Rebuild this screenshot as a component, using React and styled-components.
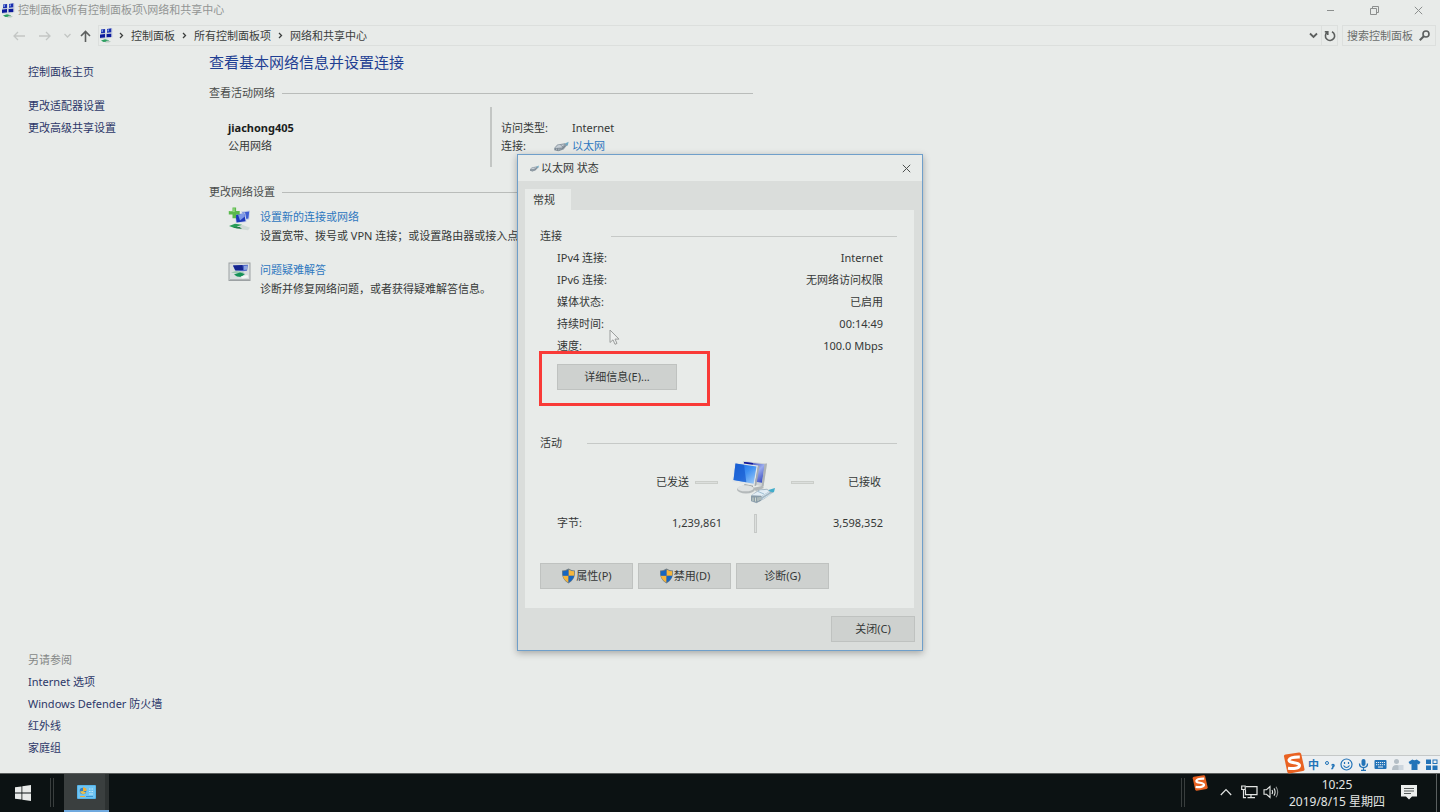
import React from "react";
import styled, { createGlobalStyle } from "styled-components";

const GlobalStyle = createGlobalStyle`
  *, *::before, *::after { box-sizing: border-box; }
  body {
    margin: 0;
    background: #e8ebe9;
    color: #353837;
    font-family: "Noto Sans", "Noto Sans CJK SC", sans-serif;
    font-size: 11px;
    line-height: 18px;
  }
  button, input { font: inherit; color: inherit; }
  a { text-decoration: none; color: inherit; }
  h1, h2, p, dl, dd, ul { margin: 0; padding: 0; font-weight: 400; }
  svg { display: block; flex: none; }
`;

const Desktop = styled.div`
  position: relative;
  display: flex;
  flex-direction: column;
  min-height: 100vh;
`;

/* ---------- window chrome ---------- */

const TitleBar = styled.header`
  display: flex;
  align-items: center;
  height: 20px;
  padding-left: 2px;
  color: #929594;
`;

const WindowTitle = styled.h1`
  flex: 1;
  margin-left: 3px;
  font-size: 11px;
  line-height: 18px;
`;

const CaptionButton = styled.button`
  display: grid;
  place-items: center;
  width: ${(p) => p.$width || 44}px;
  height: 20px;
  padding: 0;
  border: 0;
  background: none;
  color: ${(p) => p.$color || "#8c8f8e"};
`;

const AddressRow = styled.nav`
  display: flex;
  align-items: center;
  height: 26px;
  padding: 5px 4px 0 10px;
`;

const NavButton = styled.button`
  display: grid;
  place-items: center;
  width: ${(p) => p.$width}px;
  height: 20px;
  padding: 0;
  border: 0;
  background: none;
  color: ${(p) => (p.$active ? "#5c5f5e" : "#c3c6c4")};
`;

const AddressBox = styled.div`
  display: flex;
  align-items: center;
  flex: 1;
  height: 21px;
  padding-left: 1px;
  border: 1px solid #dcdfdd;
`;

const Crumbs = styled.div`
  display: flex;
  align-items: center;
  flex: 1;
  gap: 7px;
  margin-left: 6px;
  color: #3b3e3d;
`;

const Refresh = styled(NavButton)`
  border-left: 1px solid #dcdfdd;
  height: 19px;
`;

const SearchBox = styled.label`
  display: flex;
  align-items: center;
  width: 94px;
  height: 21px;
  margin-left: 4px;
  padding: 0 5px 0 4px;
  border: 1px solid #dcdfdd;
  color: #5c5f5e;
`;

const SearchInput = styled.input`
  flex: 1;
  min-width: 0;
  height: 18px;
  padding: 0;
  border: 0;
  outline: 0;
  background: none;
  &::placeholder { color: #6b6e6d; opacity: 1; }
`;

/* ---------- page ---------- */

const Body = styled.div`
  display: flex;
  flex: 1;
`;

const Sidebar = styled.aside`
  display: flex;
  flex-direction: column;
  justify-content: space-between;
  width: 209px;
  flex: none;
  padding: 15px 0 14px 28px;
`;

const SideGroup = styled.div`
  display: flex;
  flex-direction: column;
  align-items: flex-start;
  margin-bottom: 12px;
  &:last-child { margin-bottom: 0; }
`;

const SideLink = styled.a`
  line-height: 22px;
  color: #2c3768;
`;

const SideCaption = styled.span`
  line-height: 22px;
  color: #858887;
`;

const Main = styled.main`
  flex: 1;
  max-width: 544px;
  padding-top: 4px;
`;

const PageHeading = styled.h2`
  font-size: 15px;
  line-height: 24px;
  color: #1f3f93;
  margin-bottom: 10px;
`;

const SectionHead = styled.h2`
  display: flex;
  align-items: center;
  font-size: 11px;
  line-height: 18px;
  color: #484b4a;
  &::after {
    content: "";
    flex: 1;
    height: 1px;
    margin-left: 7px;
    background: #b9bcba;
  }
`;

const NetworkBlock = styled.div`
  display: flex;
  height: 60px;
  margin: 5px 0 16px;
  padding-left: 19px;
`;

const NetworkName = styled.div`
  width: 264px;
  padding-top: 12px;
  border-right: 2px solid #c3c6c4;
`;

const StrongName = styled.strong`
  display: block;
  color: #1b1d1c;
  font-weight: 700;
`;

const NetworkFacts = styled.dl`
  display: grid;
  grid-template-columns: 52px auto;
  grid-auto-rows: 18px;
  padding: 12px 0 0 9px;
`;

const FactValue = styled.dd`
  display: flex;
  align-items: center;
  gap: 3px;
  padding-left: ${(p) => (p.$icon ? 1 : 19)}px;
`;

const Link = styled.a`
  color: #2d77bf;
`;

const TaskList = styled.ul`
  display: flex;
  flex-direction: column;
  gap: 15px;
  list-style: none;
  padding: 6px 0 0 19px;
`;

const Task = styled.li`
  display: flex;
  gap: 9px;
  line-height: 19px;
  white-space: nowrap;
`;

const TaskText = styled.div`
  display: flex;
  flex-direction: column;
`;

/* ---------- status dialog ---------- */

const Dialog = styled.section`
  position: absolute;
  left: 517px;
  top: 154px;
  width: 406px;
  border: 1px solid #6f9fca;
  background: #dadddb;
  box-shadow: 0 2px 7px rgba(0, 0, 0, 0.3);
`;

const DialogBar = styled.header`
  display: flex;
  align-items: center;
  height: 26px;
  padding-left: 12px;
  gap: 2px;
  background: #e8ebe9;
`;

const DialogTitle = styled.h2`
  flex: 1;
  font-size: 11px;
  line-height: 18px;
`;

const DialogBody = styled.div`
  padding: 8px 7px;
`;

const Tab = styled.button`
  display: block;
  width: 46px;
  height: 21px;
  padding: 0 8px;
  border: 0;
  text-align: left;
  background: #e8ebe9;
`;

const Panel = styled.div`
  margin-right: 1px;
  padding: 16px 17px 19px 15px;
  background: #e8ebe9;
`;

const GroupHead = styled.div`
  display: flex;
  align-items: center;
  height: 20px;
  &::after {
    content: "";
    flex: 1;
    height: 1px;
    margin-left: ${(p) => p.$gap}px;
    background: #c6c9c7;
  }
`;

const StatusList = styled.dl`
  padding: 1px 14px 0 17px;
`;

const StatusRow = styled.div`
  display: flex;
  justify-content: space-between;
  line-height: 22px;
`;

const PushButton = styled.button`
  display: flex;
  align-items: center;
  justify-content: center;
  width: ${(p) => p.$width}px;
  height: 26px;
  padding: 0;
  border: 1px solid #bfc2c0;
  background: #ced1cf;
`;

const DetailsArea = styled.div`
  position: relative;
  padding: 7px 0 43px 17px;
`;

const Highlight = styled.div`
  position: absolute;
  left: -1px;
  top: -6px;
  width: 171px;
  height: 55px;
  border: 3px solid #f93a37;
  pointer-events: none;
`;

const Pointer = styled.svg`
  position: absolute;
  left: 91px;
  top: 174px;
`;

const Activity = styled.div`
  display: grid;
  grid-template-columns: 149px 42px 52px 34px 1fr;
  align-items: center;
  height: 58px;
  padding-right: 16px;
  text-align: right;
`;

const Dash = styled.span`
  width: 23px;
  height: 3px;
  margin-left: ${(p) => p.$inset}px;
  border: 1px solid #cbceca;
  background: #dcdfdd;
`;

const Bytes = styled.div`
  display: grid;
  grid-template-columns: 65px 100px 1fr 1fr;
  align-items: center;
  height: 24px;
  margin-bottom: 28px;
  padding: 0 14px 0 17px;
  text-align: right;
`;

const BytesLabel = styled.span`
  text-align: left;
`;

const ByteBar = styled.span`
  width: 3px;
  height: 19px;
  margin-left: 32px;
  border: 1px solid #c6c9c7;
  background: #dcdfdd;
`;

const ButtonRow = styled.div`
  display: flex;
  gap: 5px;
`;

const DialogFooter = styled.footer`
  display: flex;
  justify-content: flex-end;
  padding-top: 8px;
`;

/* ---------- input method bar and taskbar ---------- */

const ImeBar = styled.div`
  position: absolute;
  right: 0;
  bottom: 39px;
  display: flex;
  align-items: center;
  gap: 4px;
  height: 18px;
  padding: 0 2px 0 13px;
  border-top: 1px solid #c5c8c8;
  background: #eceff1;
  color: #2273b8;
`;

const ImeLogo = styled.div`
  position: absolute;
  left: -12px;
  top: -4px;
`;

const ImeMode = styled.span`
  width: 11px;
  font-weight: 700;
  line-height: 16px;
`;

const Taskbar = styled.footer`
  display: flex;
  height: 39px;
  border-top: 1px solid #5b5e5d;
  background: #0c1213;
  color: #e3e5e4;
`;

const StartButton = styled.button`
  display: grid;
  place-items: center;
  width: 45px;
  padding: 0 0 1px;
  border: 0;
  background: none;
`;

const Grip = styled.span`
  width: 4px;
  height: 29px;
  margin: 4px ${(p) => p.$after}px 0 ${(p) => p.$before}px;
  border: solid #393e3e;
  border-width: 0 1px;
`;

const TaskButton = styled.button`
  display: grid;
  place-items: center;
  width: 45px;
  padding: 0;
  border: 0;
  border-bottom: 2px solid #6fa9de;
  background: linear-gradient(to right, #3a3f3f 41px, #2d3232 41px);
`;

const Spacer = styled.div`
  flex: 1;
`;

const TrayButton = styled.button`
  display: grid;
  align-content: ${(p) => (p.$top ? "start" : "center")};
  justify-content: center;
  width: ${(p) => p.$width}px;
  padding: 1px 0 ${(p) => (p.$top ? 0 : 3)}px;
  border: 0;
  background: none;
`;

const Clock = styled.button`
  width: 104px;
  padding: 0 0 1px;
  border: 0;
  background: none;
  font-size: 12px;
  line-height: 17px;
  text-align: center;
  white-space: nowrap;
`;

const ShowDesktop = styled.span`
  width: 4px;
  margin-left: 8px;
  border-left: 1px solid #5a5f5f;
`;

/* ---------- drawings ---------- */

const NetGlyph = () => (
  <svg width="13" height="15" viewBox="0 0 13 15" aria-hidden="true">
    <path d="M1 1.500l4-.6v4.400l-4 .3zM7 1l4.500-.8v4.300l-4.500.5z" fill="#1a2fae" />
    <path d="M0 6.500l5-.4v3.600l-5 .4zM6.500 6l5-.6v3.700l-5 .5z" fill="#0b1a9b" />
    <path d="M1.500 2l1.500-.3v2l-1.500.3zM7.500 1.600l1.500-.3v2l-1.500.3z" fill="#7f9ae4" />
    <path d="M0 5.700l5-.3M6 5.300l6-.5M0 10.400l11-.9" stroke="#bcc6d2" strokeWidth=".8" />
    <path d="M12 .5v9M5.600 1v9" stroke="#c4cde0" strokeWidth=".8" />
    <path d="M1 12.400l4-1.200 4 1-1.500 1.600-4 .2z" fill="#2d9f61" />
    <path d="M7 12.600l4 .7-2 1.200H5z" fill="#b7c9c0" />
  </svg>
);

const Plug = ({ width, height }) => (
  <svg width={width} height={height} viewBox="0 0 16 12" aria-hidden="true">
    <path d="M10 3.500L15.800.8 14.800 5l-3.300 1z" fill="#6fa9c4" />
    <path d="M0 7.500l3.500-3.700 8-1.300 2.300 2.300-3.500 4.500-5.800 2L0 10z" fill="#8f9ba5" />
    <path d="M1 7.500l3-2.800 7-1L8.300 7z" fill="#c6ced5" />
    <path d="M1 8.200l6.300-.5v2L4 10.700 1 9.500z" fill="#76838e" />
    <path d="M2.500 10V8.300M4.500 10.300V8.200M6.300 9.800V8" stroke="#dbe1e5" strokeWidth=".6" />
    <path d="M8 9l4-3.500M7 4.500l2.500 1.800" stroke="#6d7a85" strokeWidth=".7" />
  </svg>
);

const AddNetworkIcon = () => (
  <svg width="23" height="24" viewBox="0 0 23 24" aria-hidden="true">
    <path d="M13 4.600l9-1.200-.8 9-3 .6z" fill="#c2cde6" />
    <path d="M14 5.400l7.200-1-.8 7-2.500.5z" fill="#3f5fd2" />
    <path d="M6 7l11-1.500 1.800 9.500-10.800 1.300z" fill="#cfd8ea" />
    <path d="M7.500 7.800l8.800-1.200 1.300 7.600-9 1.200z" fill="#1d39bb" />
    <path d="M10 7.500l6.300-.9.500 3-4.800 4z" fill="#7d98e8" />
    <path d="M1 19l6-2.300 7 1-2 2.300-5.500.9z" fill="#299d58" />
    <path d="M9 19.500l5-1.700 8 3-2 2.500-8-1z" fill="#cfdad6" />
    <path d="M5 20.500l6.500-.5 2.500 1.800-5-.2z" fill="#12713a" />
    <path d="M4.500.5h3.600v3.600h3.600v3.500H8.100v3.700H4.500V7.600H.8V4.100h3.700z" fill="#5bb94d" />
    <path d="M5.300 1.300h1.400v3.600H1.600v-.3h3.700z" fill="#98dc85" />
  </svg>
);

const TroubleshootIcon = () => (
  <svg width="23" height="22" viewBox="0 0 23 22" aria-hidden="true">
    <rect x="1" y="3" width="21" height="17.500" fill="#dadedf" stroke="#9ca1a3" />
    <path d="M5 5.500l15-.8-1 6-4 .5-8-.9z" fill="#5069c8" />
    <path d="M5 5.500l9.500-.4.6 5-7.600.3z" fill="#14248f" />
    <path d="M16 6l3.500-.3-.4 3.800-3 .5z" fill="#8ea5df" />
    <path d="M3 12.500l5-1.500 8 1-2.500 2.500z" fill="#9cc9b0" />
    <path d="M6 14.500l6-2 5 1.500-4 3-4-.5z" fill="#149157" />
    <path d="M12.500 16.500l7-1.500 1 2.500-6 1z" fill="#f3f6f4" />
    <path d="M2 19.500h20" stroke="#b0b5b7" />
  </svg>
);

const ComputersIcon = () => (
  <svg width="46" height="44" viewBox="0 0 46 44" aria-hidden="true">
    <defs>
      <linearGradient id="screenFront" x1="0" y1="0" x2="1" y2="1">
        <stop offset="0" stopColor="#1b66d9" />
        <stop offset=".5" stopColor="#3f90f2" />
        <stop offset="1" stopColor="#a5cff8" />
      </linearGradient>
      <linearGradient id="screenBack" x1="0" y1="0" x2="1" y2="1">
        <stop offset="0" stopColor="#111b9d" />
        <stop offset=".55" stopColor="#9aabee" />
        <stop offset="1" stopColor="#2438b8" />
      </linearGradient>
    </defs>
    <path d="M21 28l10-2 2 2-8 3z" fill="#b3b7b8" />
    <path d="M12 1l24 2.500-3.500 23L10 22z" fill="#ced2d4" />
    <path d="M13 2l21 2.300-3 18.500-19-3z" fill="url(#screenBack)" />
    <path d="M13 2l9 1-.5 3L13 5z" fill="#10189a" />
    <path d="M36 3.500l-3.500 23-2 .5 3-23z" fill="#aeb3b5" />
    <path d="M13 22l9 2v5h-8z" fill="#979d9f" />
    <ellipse cx="15" cy="29.500" rx="9" ry="4" fill="#b4b9ba" />
    <ellipse cx="14.500" cy="28.300" rx="8" ry="3" fill="#dfe2e2" />
    <path d="M3.500 2.200L27 5.500 23.500 26 1 21.700z" fill="#e3e6e7" />
    <path d="M4.500 3.500L25.500 6.500 22.600 23.700 2.500 20z" fill="url(#screenFront)" />
    <path d="M4.500 3.500L13 4.700l2.300 17.600L2.500 20z" fill="#1558cf" opacity=".7" />
    <path d="M27 5.500L23.500 26l1.700-.3L28.500 6z" fill="#a7adb0" />
    <path d="M34 31.500q5-2.500 10-3.500l-1 4-7 3.500z" fill="#41adcb" />
    <path d="M20 35.500l8-6 8-.7 3.500 3 3 .5-9 6.500-8 4.500-5.500-2z" fill="#a5b6c2" />
    <path d="M21 35l8-4.700 7-.5 2 1.700-7.500 4.500z" fill="#e2edf5" />
    <path d="M20 36l10-.3v5l-4.500 2-5.500-2z" fill="#8a9ca8" />
    <path d="M22 37.500v3.500M24.500 37.500v4M27 37.300v3.700M29 37v3" stroke="#dfe6d5" strokeWidth=".8" />
    <path d="M31 36.500l7.500-4.500M31.500 39l9-5.500" stroke="#d0e3ee" strokeWidth="1" />
    <path d="M27 31.500l6 2.500" stroke="#8fb2c9" strokeWidth=".8" />
  </svg>
);

const Shield = () => (
  <svg width="15" height="16" viewBox="0 0 15 16" aria-hidden="true">
    <path d="M7.500.5Q10.500 2.600 14 2.500q.8 9-6.500 13Q.2 11.500 1 2.500 4.500 2.600 7.500.5z" fill="#6f7d86" />
    <path d="M7 1.800V7.500H1.800V3.300Q4.700 3.300 7 1.800z" fill="#1766c0" />
    <path d="M8 1.800Q10.300 3.300 13.200 3.300v4.200H8z" fill="#f6b63c" />
    <path d="M1.900 8H7v6.300Q2.600 11.600 1.900 8z" fill="#f6b63c" />
    <path d="M13.100 8H8v6.300Q12.400 11.600 13.100 8z" fill="#1766c0" />
  </svg>
);

const Chevron = ({ d, w = 7, h = 7, weight = 1.3 }) => (
  <svg width={w} height={h} viewBox={`0 0 ${w} ${h}`} fill="none" stroke="currentColor" strokeWidth={weight} aria-hidden="true">
    <path d={d} />
  </svg>
);

const Cross = () => (
  <Chevron w={9} h={9} weight={1} d="M.8.8l7.400 7.400M8.200.8L.8 8.200" />
);

const SogouLogo = ({ size }) => (
  <svg width={size} height={size} viewBox="0 0 22 22" aria-hidden="true">
    <path d="M1 4.500Q.7 2.800 2.500 2.400L16 .4q1.800-.2 2.200 1.500l3.300 15q.3 1.800-1.500 2.200L6.500 21.500q-1.800.3-2.200-1.400z" fill="#e96222" />
    <path d="M16.800 5Q7 4.800 6 8c-.6 3.600 10.500 1.800 10.500 5.400 0 3.300-6.500 3.500-11.500 2.900" fill="none" stroke="#fff" strokeWidth="3" />
  </svg>
);

const Ime = ({ children }) => (
  <svg width="13" height="13" viewBox="0 0 13 13" fill="none" stroke="currentColor" aria-hidden="true">
    {children}
  </svg>
);

/* ---------- data ---------- */

const crumbs = ["控制面板", "所有控制面板项", "网络和共享中心"];
const seeAlso = ["Internet 选项", "Windows Defender 防火墙", "红外线", "家庭组"];
const status = [
  ["IPv4 连接:", "Internet"],
  ["IPv6 连接:", "无网络访问权限"],
  ["媒体状态:", "已启用"],
  ["持续时间:", "00:14:49"],
  ["速度:", "100.0 Mbps"],
];

function StatusDialog() {
  return (
    <Dialog role="dialog" aria-labelledby="status-title">
      <DialogBar>
        <Plug width={9} height={7} />
        <DialogTitle id="status-title">以太网 状态</DialogTitle>
        <CaptionButton $width={32} $color="#4c4f4e" aria-label="关闭">
          <Cross />
        </CaptionButton>
      </DialogBar>
      <DialogBody>
        <Tab role="tab" aria-selected="true">常规</Tab>
        <Panel>
          <GroupHead $gap={49}>连接</GroupHead>
          <StatusList>
            {status.map(([name, value]) => (
              <StatusRow key={name}>
                <dt>{name}</dt>
                <dd>{value}</dd>
              </StatusRow>
            ))}
          </StatusList>
          <DetailsArea>
            <PushButton $width={120}>详细信息(E)...</PushButton>
            <Highlight />
          </DetailsArea>
          <GroupHead $gap={25}>活动</GroupHead>
          <Activity>
            <span>已发送</span>
            <Dash $inset={6} />
            <ComputersIcon />
            <Dash $inset={8} />
            <span>已接收</span>
          </Activity>
          <Bytes>
            <BytesLabel>字节:</BytesLabel>
            <span>1,239,861</span>
            <ByteBar />
            <span>3,598,352</span>
          </Bytes>
          <ButtonRow>
            <PushButton $width={93}><Shield />属性(P)</PushButton>
            <PushButton $width={93}><Shield />禁用(D)</PushButton>
            <PushButton $width={93}>诊断(G)</PushButton>
          </ButtonRow>
        </Panel>
        <DialogFooter>
          <PushButton $width={84}>关闭(C)</PushButton>
        </DialogFooter>
      </DialogBody>
      <Pointer width="12" height="17" viewBox="0 0 12 17" aria-hidden="true">
        <path d="M1 1v12.500l3-2.700 2 4.500 2-.9-2-4.300h4z" fill="#eef0ef" stroke="#9a9d9c" />
      </Pointer>
    </Dialog>
  );
}

export default function App() {
  return (
    <Desktop lang="zh-CN">
      <GlobalStyle />
      <TitleBar>
        <NetGlyph />
        <WindowTitle>控制面板\所有控制面板项\网络和共享中心</WindowTitle>
        <CaptionButton aria-label="最小化">
          <Chevron w={9} h={9} weight={1} d="M1 4.500h7" />
        </CaptionButton>
        <CaptionButton aria-label="还原">
          <Chevron w={9} h={9} weight={1} d="M.5 2.500h6v6h-6zM2.500 2.500v-2h6v6h-2" />
        </CaptionButton>
        <CaptionButton aria-label="关闭"><Cross /></CaptionButton>
      </TitleBar>

      <AddressRow>
        <NavButton $width={18} aria-label="后退">
          <Chevron w={12} h={10} d="M12 5H1M5 1L1 5l4 4" />
        </NavButton>
        <NavButton $width={34} aria-label="前进">
          <Chevron w={12} h={10} d="M0 5h11M7 1l4 4-4 4" />
        </NavButton>
        <NavButton $width={10} aria-label="最近的位置">
          <Chevron d="M.5 2l3 3 3-3" />
        </NavButton>
        <NavButton $width={26} $active aria-label="上移">
          <Chevron w={11} h={12} weight={1.6} d="M5.500 12V1.500M1 6l4.500-4.500L10 6" />
        </NavButton>
        <AddressBox>
          <NetGlyph />
          <Crumbs>
            {crumbs.map((name) => (
              <React.Fragment key={name}>
                <Chevron w={5} d="M1 1l2.500 2.500L1 6" />
                <a href="#crumb">{name}</a>
              </React.Fragment>
            ))}
          </Crumbs>
          <NavButton $width={15} $active aria-label="以前的位置">
            <Chevron w={9} weight={1.8} d="M1 1.500l3.500 3.500L8 1.500" />
          </NavButton>
          <Refresh $width={16} $active aria-label="刷新">
            <svg width="12" height="12" viewBox="0 0 12 12" fill="none" stroke="currentColor" strokeWidth="1.600" aria-hidden="true">
              <path d="M8 1.700a4.600 4.600 0 1 1-4.500.3M3.800 5V1.700H.8" />
            </svg>
          </Refresh>
        </AddressBox>
        <SearchBox>
          <SearchInput placeholder="搜索控制面板" aria-label="搜索控制面板" />
          <svg width="11" height="11" viewBox="0 0 11 11" fill="none" stroke="currentColor" strokeWidth="1.600" aria-hidden="true">
            <circle cx="7" cy="4" r="3" />
            <path d="M4.800 6.200L.8 10.200" strokeWidth="2" />
          </svg>
        </SearchBox>
      </AddressRow>

      <Body>
        <Sidebar>
          <div>
            <SideGroup>
              <SideLink href="#home">控制面板主页</SideLink>
            </SideGroup>
            <SideGroup>
              <SideLink href="#adapter">更改适配器设置</SideLink>
              <SideLink href="#sharing">更改高级共享设置</SideLink>
            </SideGroup>
          </div>
          <SideGroup>
            <SideCaption>另请参阅</SideCaption>
            {seeAlso.map((name) => (
              <SideLink href="#see-also" key={name}>{name}</SideLink>
            ))}
          </SideGroup>
        </Sidebar>

        <Main>
          <PageHeading>查看基本网络信息并设置连接</PageHeading>
          <SectionHead>查看活动网络</SectionHead>
          <NetworkBlock>
            <NetworkName>
              <StrongName>jiachong405</StrongName>
              <p>公用网络</p>
            </NetworkName>
            <NetworkFacts>
              <dt>访问类型:</dt>
              <FactValue>Internet</FactValue>
              <dt>连接:</dt>
              <FactValue $icon>
                <Plug width={15} height={11} />
                <Link href="#ethernet">以太网</Link>
              </FactValue>
            </NetworkFacts>
          </NetworkBlock>
          <SectionHead>更改网络设置</SectionHead>
          <TaskList>
            <Task>
              <AddNetworkIcon />
              <TaskText>
                <Link href="#setup">设置新的连接或网络</Link>
                <p>设置宽带、拨号或 VPN 连接；或设置路由器或接入点。</p>
              </TaskText>
            </Task>
            <Task>
              <TroubleshootIcon />
              <TaskText>
                <Link href="#troubleshoot">问题疑难解答</Link>
                <p>诊断并修复网络问题，或者获得疑难解答信息。</p>
              </TaskText>
            </Task>
          </TaskList>
        </Main>
      </Body>

      <StatusDialog />

      <ImeBar>
        <ImeLogo><SogouLogo size={22} /></ImeLogo>
        <ImeMode>中</ImeMode>
        <Ime>
          <circle cx="4" cy="5" r="1.500" />
          <path d="M9 7.500a1 1 0 1 1 1 1q.3 1.500-1.500 2.500" strokeWidth="1.600" />
        </Ime>
        <Ime>
          <circle cx="6.500" cy="6.500" r="5.500" strokeWidth="1.200" />
          <path d="M4.500 4v2M8.500 4v2M3.500 7.500q3 4 6 0" strokeWidth="1.200" />
        </Ime>
        <Ime>
          <rect x="4.500" y="1" width="4" height="7" rx="2" fill="currentColor" stroke="none" />
          <path d="M2.500 5.500q0 4 4 4t4-4M6.500 9.500v3M4 12.300h5" strokeWidth="1.300" />
        </Ime>
        <Ime>
          <rect x=".5" y="2" width="12" height="9" rx="1" fill="currentColor" stroke="none" />
          <path d="M2 4.500h9M2 6.700h9" stroke="#eceff1" strokeDasharray="1.200 .8" />
          <path d="M4 9h5" stroke="#eceff1" />
        </Ime>
        <Ime>
          <g fill="#b4bec6" stroke="none">
            <circle cx="5.500" cy="3.500" r="2.500" />
            <path d="M1 12q0-5 4.500-5 2 0 3 1v4z" />
            <rect x="7.500" y="7" width="5" height="5" fill="#cdd6de" />
          </g>
        </Ime>
        <Ime>
          <path d="M4.300 1.500q2.200 1.500 4.400 0L12.500 4 11 6.500l-1.500-.7V12h-6V5.800L2 6.500.5 4z" fill="currentColor" stroke="none" />
        </Ime>
        <Ime>
          <path d="M1 1.500h5v4.500H1zM1 7.500h5V12H1zM7.500 7.500h5V12h-5z" fill="currentColor" stroke="none" />
          <rect x="8" y="2" width="4" height="3.500" />
        </Ime>
      </ImeBar>

      <Taskbar>
        <StartButton aria-label="开始">
          <svg width="16" height="16" viewBox="0 0 16 16" fill="#e8eae9" aria-hidden="true">
            <path d="M0 2.300l6.500-.9v6.200H0zM7.300 1.300L16 0v7.600H7.300zM0 8.400h6.500v6.200L0 13.700zM7.300 8.400H16V16l-8.700-1.300z" />
          </svg>
        </StartButton>
        <Grip $before={5} $after={10} />
        <TaskButton aria-label="控制面板">
          <svg width="19" height="14" viewBox="0 0 19 14" aria-hidden="true">
            <rect width="19" height="14" rx="1" fill="#55b4ea" />
            <rect x="1" y="1" width="17" height="12" fill="#6fc4f2" />
            <circle cx="6" cy="6" r="3.300" fill="#2f7fc4" />
            <path d="M6 6V2.200A3.600 3.600 0 0 1 9.600 6z" fill="#f1ad34" />
            <path d="M3 6.500A3.300 3.300 0 0 0 9 7.500L6 6z" fill="#e6c154" />
            <path d="M12 4h1.500M14.500 4H16M12 6.500h1.500M14.500 6.500H16M12 9h4" stroke="#c3e6f9" />
            <path d="M3 11.500h5" stroke="#f1ad34" />
            <path d="M9 11.500h7" stroke="#3c93cf" />
          </svg>
        </TaskButton>
        <Spacer />
        <Grip $before={0} $after={6} />
        <TrayButton $width={18} $top aria-label="搜狗输入法"><SogouLogo size={16} /></TrayButton>
        <TrayButton $width={33} aria-label="显示隐藏的图标">
          <Chevron w={12} h={8} weight={1.2} d="M.8 7L6 1.500 11.200 7" />
        </TrayButton>
        <TrayButton $width={14} aria-label="网络">
          <svg width="17" height="14" viewBox="0 0 17 14" fill="none" stroke="currentColor" strokeWidth="1.200" aria-hidden="true">
            <path d="M5 1.600h11v8H4.500V5M10 9.600v3M6.500 12.700h7.500M.7 1h3.500v3.500H.7zM2.500 4.500v8.200H5" />
          </svg>
        </TrayButton>
        <TrayButton $width={29} aria-label="音量">
          <svg width="16" height="14" viewBox="0 0 16 14" fill="none" stroke="currentColor" strokeWidth="1.100" aria-hidden="true">
            <path d="M1 4.700h2.500L7 1.500v11L3.500 9.300H1zM9 5q1.200 2 0 4M11 3.400q2.200 3.600 0 7.200" />
            <path d="M13 1.700q3.400 5.300 0 10.600" opacity=".6" />
          </svg>
        </TrayButton>
        <Clock>10:25<br />2019/8/15 星期四</Clock>
        <TrayButton $width={39} aria-label="通知">
          <svg width="16" height="16" viewBox="0 0 16 16" aria-hidden="true">
            <path d="M0 1h16v11.500H11L8 15.500l-3-3H0z" fill="#eceeed" />
            <path d="M3 4.500h10M3 7h10M3 9.500h7" stroke="#555a5a" />
          </svg>
        </TrayButton>
        <ShowDesktop />
      </Taskbar>
    </Desktop>
  );
}
